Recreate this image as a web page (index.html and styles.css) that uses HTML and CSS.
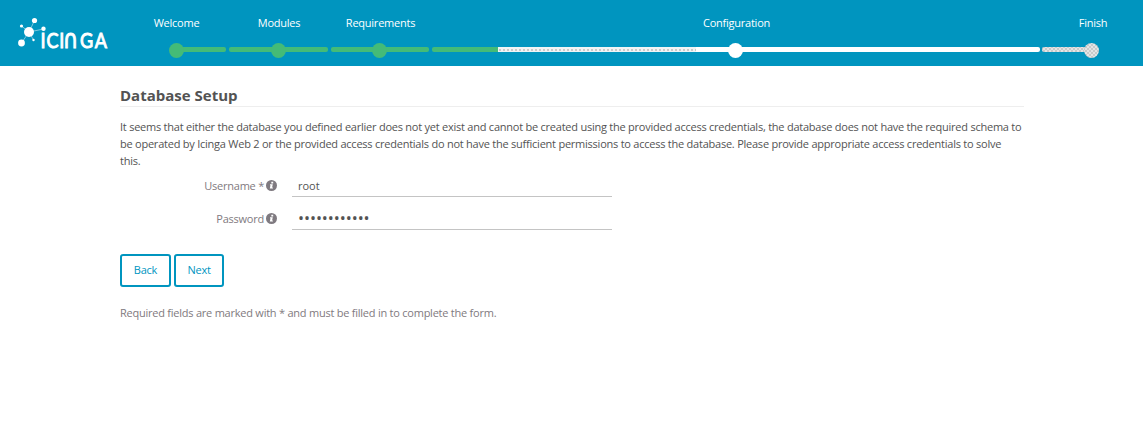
FILE: index.html
```html
<!DOCTYPE html>
<html lang="en">
<head>
    <meta charset="UTF-8">
    <meta name="viewport" content="width=device-width, initial-scale=1.0">
    <title>Icinga Web 2 Setup</title>
    <link rel="stylesheet" href="styles.css">
</head>
<body>
    <!-- Header with logo and wizard progress -->
    <header class="header">
        <svg class="logo" width="96" height="46" viewBox="0 0 96 46">
            <g stroke="#fff" stroke-width="0.7" stroke-opacity="0.7">
                <path d="M11 16L16.500 4.500M11 16L3.500 10M11 16L3.500 27M11 16L25.500 13M11 16L15.500 24"/>
            </g>
            <g fill="#fff">
                <circle cx="11" cy="16" r="5"/>
                <circle cx="16.500" cy="4.500" r="2.600"/>
                <circle cx="3.500" cy="10" r="1.600"/>
                <circle cx="3.500" cy="27" r="3.400"/>
                <circle cx="25.500" cy="12.800" r="2.200"/>
                <circle cx="15.500" cy="24" r="1.200"/>
            </g>
            <text class="logo-text" transform="scale(0.82 1)" x="27.300 34.900 50.300 55 75.500 93.500" y="32">ICI<tspan class="logo-arch">∩</tspan>GA</text>
        </svg>
        <ol class="progress">
            <li class="step first done"><span>Welcome</span><div class="track"><i class="dot"></i></div></li>
            <li class="step done"><span>Modules</span><div class="track"><i class="dot"></i></div></li>
            <li class="step done"><span>Requirements</span><div class="track"><i class="dot"></i></div></li>
            <li class="step active"><span>Configuration</span><div class="track"><i class="dot"></i></div></li>
            <li class="step last"><span>Finish</span><div class="track"><i class="dot"></i></div></li>
        </ol>
    </header>

    <!-- Database form -->
    <main class="content">
        <h2>Database Setup</h2>
        <p class="description">
            It seems that either the database you defined earlier does not yet exist and cannot be created using the provided access credentials, the database does not have the required schema to<br>
            be operated by Icinga Web 2 or the provided access credentials do not have the sufficient permissions to access the database. Please provide appropriate access credentials to solve<br>
            this.
        </p>
        <form>
            <div class="control">
                <label for="username">Username *</label>
                <svg class="info" width="11" height="11" viewBox="0 0 11 11"><circle cx="5.500" cy="5.500" r="5.500" fill="#7f7a80"/><path d="M5.300 1.800h1.900v1.600H5.300zM4 4.300h2.800L6.100 7.600h.8v1H3.800l.7-3.300H4z" fill="#fff"/></svg>
                <input type="text" id="username" value="root">
            </div>
            <div class="control">
                <label for="password">Password</label>
                <svg class="info" width="11" height="11" viewBox="0 0 11 11"><circle cx="5.500" cy="5.500" r="5.500" fill="#7f7a80"/><path d="M5.300 1.800h1.900v1.600H5.300zM4 4.300h2.800L6.100 7.600h.8v1H3.800l.7-3.300H4z" fill="#fff"/></svg>
                <input type="text" id="password" class="secret" value="••••••••••••">
            </div>
            <div class="buttons">
                <button type="button">Back</button>
                <button type="button" class="next">Next</button>
            </div>
        </form>
        <p class="hint">Required fields are marked with * and must be filled in to complete the form.</p>
    </main>
</body>
</html>
```
FILE: styles.css
```css
* {
    box-sizing: border-box;
}
body {
    margin: 0;
    font-family: "Open Sans", "Noto Sans", sans-serif;
    font-size: 11px;
    line-height: 17px;
    letter-spacing: -0.236px;
    color: #535353;
    background-color: #fff;
}
.header {
    display: flex;
    height: 66px;
    background-color: #0095bf;
    color: #fff;
}
.logo {
    margin: 16px 0 0 18px;
    overflow: visible;
}
.logo-text {
    font-family: "Lato", sans-serif;
    font-size: 22px;
    letter-spacing: 0;
    fill: #fff;
    stroke: #fff;
    stroke-width: 1;
}
.logo-arch {
    font-family: "DejaVu Sans", sans-serif;
    font-size: 26px;
}
.progress {
    display: grid;
    grid-template-columns: 100px 99px 98px 608px 99px;
    column-gap: 3px;
    margin: 0 0 0 12px;
    padding: 14px 0 0;
    list-style: none;
}
.step {
    text-align: center;
    white-space: nowrap;
}
.step span {
    display: block;
    margin-left: 1px;
}
.track {
    display: flex;
    justify-content: center;
    align-items: center;
    height: 5px;
    margin-top: 16px;
    padding-right: 1px;
    border-radius: 2px;
    background: #c8cccc;
}
.dot {
    flex: none;
    width: 15px;
    height: 15px;
    margin-top: 2px;
    border-radius: 50%;
    background-color: #fff;
}
.done .track,
.done .dot {
    background: #44bb77;
}
.first .track {
    margin-left: 50px;
    justify-content: flex-start;
}
.first .dot {
    margin-left: -7px;
}
.active .track {
    padding-right: 2px;
    background:
        linear-gradient(to right, #44bb77 66px, transparent 66px, transparent 264px, #fff 264px),
        radial-gradient(circle at 2px 2px, #c8c8c8 0.7px, transparent 1px) 66px 1px / 4px 5px repeat-x,
        #eff4f5;
}
.last .track {
    margin-left: -1px;
    margin-right: 50px;
    justify-content: flex-end;
}
.last .dot {
    margin-right: -8px;
}
.last .track,
.last .dot {
    background: radial-gradient(circle, #f4f4f4 0.6px, transparent 0.9px) 0 0 / 4px 4px,
        radial-gradient(circle, #f4f4f4 0.6px, transparent 0.9px) 2px 2px / 4px 4px,
        #c8caca;
}
.content {
    width: 904px;
    margin-left: 120px;
    padding-top: 19px;
}
h2 {
    margin: 0 0 11px;
    height: 22px;
    font-size: 15px;
    line-height: 20px;
    letter-spacing: 0;
    border-bottom: 1px solid #eee;
}
p {
    margin: 0;
}
.description {
    white-space: nowrap;
}
.control {
    display: flex;
    align-items: center;
    height: 23px;
    margin-bottom: 10px;
}
.description + form {
    margin-top: 5px;
}
label {
    width: 144px;
    text-align: right;
    color: #7f7a80;
}
.info {
    margin-left: 2px;
}
input {
    width: 320px;
    height: 23px;
    margin-left: 15px;
    padding: 0 6px;
    border: none;
    border-bottom: 1px solid #c4c4c4;
    outline: none;
    font: inherit;
    color: #535353;
}
.secret {
    font-size: 16px;
    letter-spacing: -0.05px;
}
.buttons {
    display: flex;
    gap: 3px;
    padding-top: 14px;
}
button {
    width: 51px;
    height: 33px;
    padding: 0 0 2px;
    border: 2px solid #0095bf;
    border-radius: 3px;
    background-color: #fff;
    color: #0095bf;
    font: inherit;
    letter-spacing: inherit;
}
.next {
    width: 50px;
}
.hint {
    margin-top: 17px;
    color: #7f7a80;
}
```
